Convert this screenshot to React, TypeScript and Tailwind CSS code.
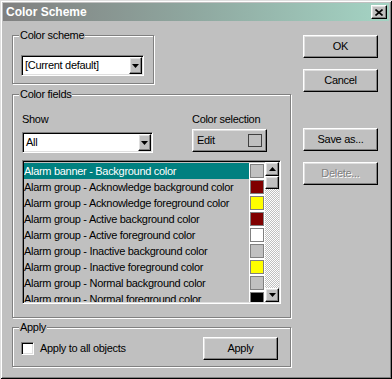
const font = { fontFamily: '"Liberation Sans", Arial, sans-serif' }

const raised =
  'border border-t-white border-l-white border-r-black border-b-black shadow-[inset_-1px_-1px_0_#808080,inset_1px_1px_0_#dfdfdf]'
const sunken =
  'border border-t-[#808080] border-l-[#808080] border-r-white border-b-white shadow-[inset_1px_1px_0_#000,inset_-1px_-1px_0_#dfdfdf]'
const etched = 'relative border border-[#808080] shadow-[inset_1px_1px_0_#fff,1px_1px_0_#fff]'

const rows = [
  { label: 'Alarm banner - Background color', color: '#c0c0c0' },
  { label: 'Alarm group - Acknowledge background color', color: '#800000' },
  { label: 'Alarm group - Acknowledge foreground color', color: '#ffff00' },
  { label: 'Alarm group - Active background color', color: '#800000' },
  { label: 'Alarm group - Active foreground color', color: '#ffffff' },
  { label: 'Alarm group - Inactive background color', color: '#c0c0c0' },
  { label: 'Alarm group - Inactive foreground color', color: '#ffff00' },
  { label: 'Alarm group - Normal background color', color: '#c0c0c0' },
  { label: 'Alarm group - Normal foreground color', color: '#000000' },
]

function Arrow({ up }: { up?: boolean }) {
  return (
    <svg width="7" height="4" viewBox="0 0 7 4" aria-hidden="true">
      <polygon points={up ? '3.5,0 7,4 0,4' : '0,0 7,0 3.5,4'} fill="#000" />
    </svg>
  )
}

function Combo({ text, width }: { text: string; width: string }) {
  return (
    <div className={`${sunken} ${width} h-[21px] bg-white flex items-stretch p-[1px]`}>
      <div className="flex-1 flex items-center pl-[2px] text-black">{text}</div>
      <div className={`${raised} w-[13px] bg-[#c0c0c0] flex items-center justify-center`}>
        <Arrow />
      </div>
    </div>
  )
}

function Button({ children, disabled }: { children: React.ReactNode; disabled?: boolean }) {
  return (
    <div
      className={`${raised} w-[75px] h-[23px] bg-[#c0c0c0] flex items-center justify-center ${
        disabled ? 'text-[#808080] [text-shadow:1px_1px_0_#fff]' : 'text-black'
      }`}
    >
      {children}
    </div>
  )
}

function Legend({ children }: { children: React.ReactNode }) {
  return (
    <span className="absolute left-[6px] top-[-8px] bg-[#c0c0c0] px-[1px] leading-[14px] text-black">
      {children}
    </span>
  )
}

export default function App() {
  return (
    <div
      className="w-[392px] h-[379px] bg-[#c0c0c0] p-[3px] text-[11px] tracking-[-0.3px] shadow-[inset_1px_1px_0_#dfdfdf,inset_-1px_-1px_0_#000,inset_2px_2px_0_#fff,inset_-2px_-2px_0_#808080]"
      style={font}
    >
      {/* Title bar */}
      <div className="h-[18px] bg-gradient-to-r from-[#808080] via-[#8fa8a0] to-[#a4d4c4] flex items-center justify-between pl-[3px] pr-[2px]">
        <span className="text-white font-bold text-[12px] tracking-normal">Color Scheme</span>
        <div className={`${raised} w-[16px] h-[14px] bg-[#c0c0c0] flex items-center justify-center`}>
          <svg width="8" height="7" viewBox="0 0 8 7" aria-hidden="true">
            <path d="M0.5 0.5 L7.5 6.5 M7.5 0.5 L0.5 6.5" stroke="#000" strokeWidth="1.6" />
          </svg>
        </div>
      </div>

      <div className="flex">
        {/* Left column */}
        <div className="ml-[9px] w-[279px] flex flex-col">
          <div className={`${etched} mt-[14px] w-[142px] h-[49px] pl-[8px] pt-[19px]`}>
            <Legend>Color scheme</Legend>
            <Combo text="[Current default]" width="w-[123px]" />
          </div>

          <div className={`${etched} mt-[10px] h-[224px] pl-[9px] pt-[17px]`}>
            <Legend>Color fields</Legend>
            <div className="flex">
              <div className="w-[170px] flex flex-col">
                <span className="leading-[14px] text-black">Show</span>
                <div className="mt-[6px]">
                  <Combo text="All" width="w-[131px]" />
                </div>
              </div>
              <div className="flex flex-col">
                <span className="leading-[14px] text-black">Color selection</span>
                <div className="mt-[3px]">
                  <div className={`${raised} w-[75px] h-[23px] bg-[#c0c0c0] flex items-center justify-between pl-[4px] pr-[4px] text-black`}>
                    <span>Edit</span>
                    <span className="w-[14px] h-[13px] border border-[#404040]" />
                  </div>
                </div>
              </div>
            </div>

            <div className={`${sunken} mt-[7px] w-[259px] h-[144px] p-[1px] bg-[#c0c0c0] flex`}>
              <div className="flex-1 overflow-hidden pt-[1px]">
                {rows.map((r, i) => (
                  <div key={r.label} className="flex h-[16px]">
                    <div
                      className={`flex-1 flex items-center whitespace-nowrap ${
                        i === 0 ? 'bg-[#008080] text-white' : 'text-black'
                      }`}
                    >
                      {r.label}
                    </div>
                    <div className="w-[16px] bg-white flex items-center justify-center">
                      <div className="w-[14px] h-[14px] border border-[#808080]" style={{ background: r.color }} />
                    </div>
                  </div>
                ))}
              </div>
              {/* Scrollbar */}
              <div className="w-[14px] flex flex-col bg-[repeating-conic-gradient(#fff_0_25%,#c0c0c0_0_50%)] bg-[length:2px_2px]">
                <div className={`${raised} h-[14px] bg-[#c0c0c0] flex items-center justify-center`}>
                  <Arrow up />
                </div>
                <div className={`${raised} h-[13px] bg-[#c0c0c0]`} />
                <div className="flex-1" />
                <div className={`${raised} h-[14px] bg-[#c0c0c0] flex items-center justify-center`}>
                  <Arrow />
                </div>
              </div>
            </div>
          </div>

          <div className={`${etched} mt-[9px] h-[40px] pl-[8px] pr-[12px] flex items-center justify-between`}>
            <Legend>Apply</Legend>
            <div className="flex items-center gap-[6px] mt-[2px]">
              <div className={`${sunken} w-[13px] h-[13px] bg-white`} />
              <span className="text-black">Apply to all objects</span>
            </div>
            <div className="mt-[2px]">
              <Button>Apply</Button>
            </div>
          </div>
        </div>

        {/* Right column */}
        <div className="ml-[12px] flex flex-col">
          <div className="mt-[14px]">
            <Button>OK</Button>
          </div>
          <div className="mt-[11px]">
            <Button>Cancel</Button>
          </div>
          <div className="mt-[36px]">
            <Button>Save as...</Button>
          </div>
          <div className="mt-[11px]">
            <Button disabled>Delete...</Button>
          </div>
        </div>
      </div>
    </div>
  )
}
